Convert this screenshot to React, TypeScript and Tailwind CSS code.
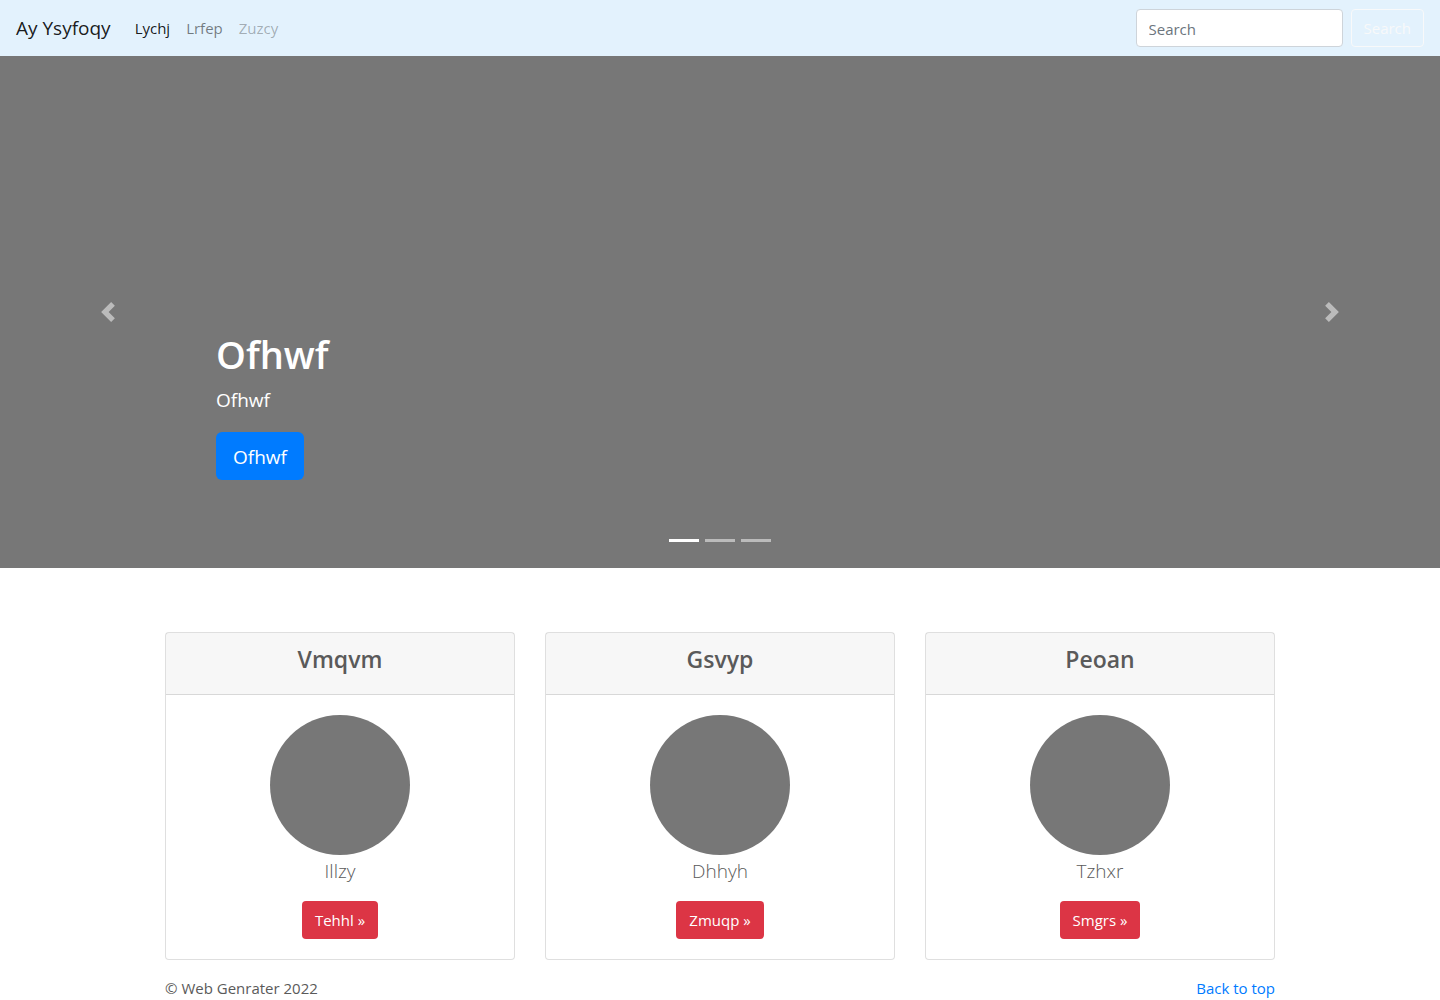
import React from "react";

const cards = [
  { title: "Vmqvm", text: "Illzy", action: "Tehhl »" },
  { title: "Gsvyp", text: "Dhhyh", action: "Zmuqp »" },
  { title: "Peoan", text: "Tzhxr", action: "Smgrs »" },
];

function Navbar() {
  return (
    <header className="flex h-14 items-center bg-[#e3f2fd] px-4">
      <a href="#" className="mr-6 text-[19px] leading-8 text-black/90">Ay Ysyfoqy</a>
      <nav className="flex gap-4">
        <a href="#" className="text-black/90">Lychj</a>
        <a href="#" className="text-black/50">Lrfep</a>
        <a href="#" className="text-black/30">Zuzcy</a>
      </nav>
      <form className="ml-auto flex gap-2" onSubmit={(e) => e.preventDefault()}>
        <input
          type="search"
          aria-label="Search"
          placeholder="Search"
          className="h-[38px] w-[207px] rounded border border-[#ced4da] bg-white px-3 pt-0.5 text-[#495057] placeholder:text-[#6c757d]"
        />
        <button type="submit" className="h-[38px] rounded border border-[#f8f9fa] px-3 text-[#f8f9fa]">Search</button>
      </form>
    </header>
  );
}

function Carousel() {
  return (
    <section className="relative h-[512px] bg-[#777]">
      <div className="absolute inset-x-[15%] bottom-[88px] text-white">
        <h1 className="mb-1.5 text-[38px] font-semibold leading-[48px]">Ofhwf</h1>
        <p className="mb-4 text-[19px] leading-8">Ofhwf</p>
        <a href="#" className="flex h-12 w-fit items-center rounded-md bg-[#007bff] px-[17px] pt-0.5 text-[19px]">Ofhwf</a>
      </div>
      <button type="button" aria-label="Previous" className="absolute inset-y-0 left-0 flex w-[15%] items-center justify-center opacity-50">
        <svg viewBox="0 0 8 8" fill="#fff" className="h-5 w-5"><path d="M5.25 0l-4 4 4 4 1.5-1.5L4.25 4l2.5-2.5L5.25 0z" /></svg>
      </button>
      <button type="button" aria-label="Next" className="absolute inset-y-0 right-0 flex w-[15%] items-center justify-center opacity-50">
        <svg viewBox="0 0 8 8" fill="#fff" className="h-5 w-5"><path d="M2.75 0l-1.5 1.5L3.75 4l-2.5 2.5L2.75 8l4-4-4-4z" /></svg>
      </button>
      <div className="absolute inset-x-0 bottom-[26px] flex justify-center gap-1.5">
        <button type="button" aria-label="Slide 1" className="h-[3px] w-[30px] bg-white" />
        <button type="button" aria-label="Slide 2" className="h-[3px] w-[30px] bg-white/50" />
        <button type="button" aria-label="Slide 3" className="h-[3px] w-[30px] bg-white/50" />
      </div>
    </section>
  );
}

export default function App() {
  return (
    <div className="bg-white font-['Open_Sans','Noto_Sans',sans-serif] text-[15px] leading-6 text-[#5a5a5a]">
      <Navbar />
      <Carousel />
      <main className="mx-auto mt-16 grid max-w-[1110px] grid-cols-3 gap-[30px] text-center">
        {cards.map((c) => (
          <article key={c.title} className="rounded border border-black/12.5 bg-white">
            <h2 className="border-b border-black/12.5 bg-black/3 pt-3 pb-5 text-[23px] font-semibold leading-[29px]">{c.title}</h2>
            <div className="flex flex-col items-center p-5">
              <div className="h-[140px] w-[140px] rounded-full bg-[#777]" />
              <p className="mb-3.5 text-[19px] font-light leading-8">{c.text}</p>
              <a href="#" className="flex h-[38px] items-center rounded bg-[#dc3545] px-[13px] text-white">{c.action}</a>
            </div>
          </article>
        ))}
      </main>
      <footer className="mx-auto flex max-w-[1110px] justify-between pt-4">
        <p>© Web Genrater 2022</p>
        <a href="#" className="text-[#007bff]">Back to top</a>
      </footer>
    </div>
  );
}
